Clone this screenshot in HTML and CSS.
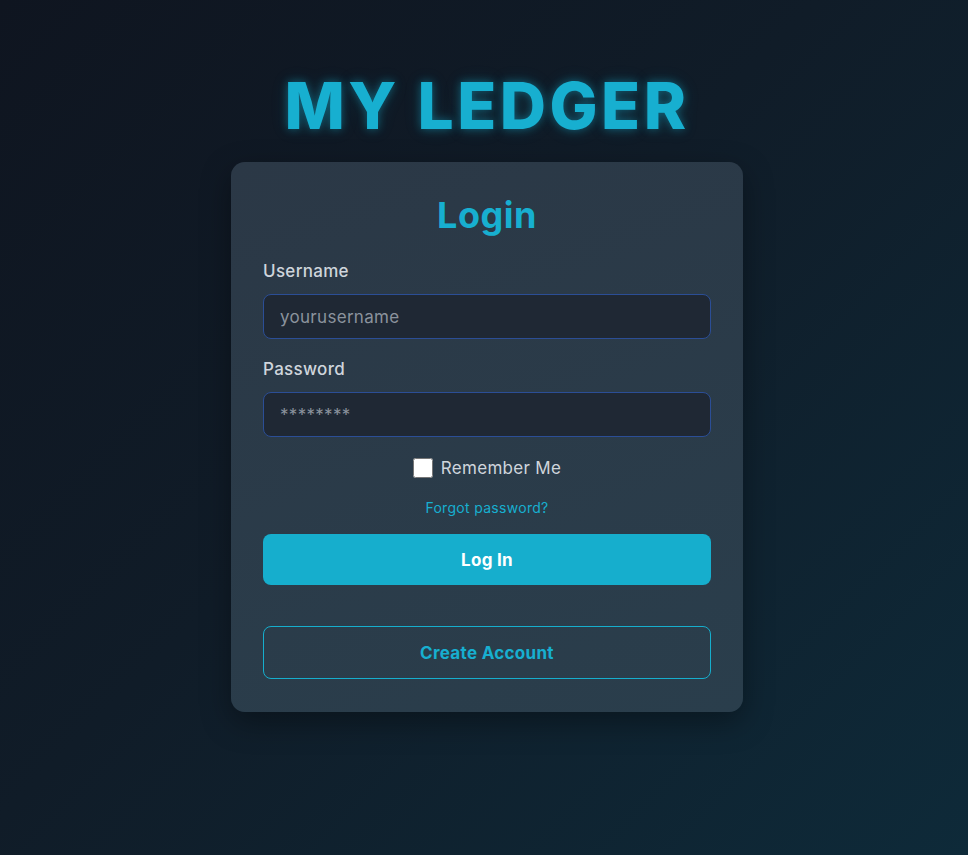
FILE: index.html
```html
<!DOCTYPE html>
<html lang="en">
<head>
<meta charset="utf-8">
<title>My Ledger - Login</title>
<link rel="stylesheet" href="styles.css">
</head>
<body>
<main class="page">
  <h1 class="brand">MY LEDGER</h1>
  <form class="card">
    <h2 class="card-title">Login</h2>
    <label class="field-label" for="username">Username</label>
    <input class="field-input" id="username" type="text" placeholder="yourusername">
    <label class="field-label field-label--spaced" for="password">Password</label>
    <input class="field-input" id="password" type="password" placeholder="********">
    <div class="remember">
      <input class="remember-box" id="remember" type="checkbox">
      <label class="remember-label" for="remember">Remember Me</label>
    </div>
    <a class="forgot" href="#">Forgot password?</a>
    <button class="btn btn-primary" type="button">Log In</button>
    <button class="btn btn-outline" type="button">Create Account</button>
  </form>
</main>
</body>
</html>
```
FILE: styles.css
```css
* { box-sizing: border-box; }
html, body { margin: 0; padding: 0; }
body {
  min-height: 100vh;
  background: linear-gradient(135deg, #0f1520 0%, #101c28 45%, #0e2a39 100%);
  font-family: "Inter", "Noto Sans", sans-serif;
  color: #cfd5dc;
  letter-spacing: 0.3px;
}
.page {
  display: flex;
  flex-direction: column;
  align-items: center;
  padding-top: 67px;
  padding-left: 6px;
  min-height: 855px;
}
.brand {
  margin: 0 0 18px;
  font-family: "Inter", sans-serif;
  font-weight: 800;
  font-size: 64px;
  line-height: 77px;
  letter-spacing: 3.5px;
  color: #17afd0;
  text-shadow: 0 0 8px rgba(23, 175, 208, 0.45), 0 0 18px rgba(23, 175, 208, 0.15);
}
.card {
  width: 512px;
  padding: 32px 32px 33px;
  border-radius: 14px;
  background: linear-gradient(160deg, #2b3846 0%, #2a3e4c 100%);
  box-shadow: 0 10px 30px rgba(0, 0, 0, 0.35);
  display: flex;
  flex-direction: column;
}
.card-title {
  margin: 0 0 22px;
  text-align: center;
  font-size: 36px;
  line-height: 43px;
  font-weight: 700;
  letter-spacing: 0.5px;
  color: #17afd0;
}
.field-label {
  display: block;
  font-size: 17px;
  line-height: 24px;
  font-weight: 500;
  color: #cfd5dc;
  margin-bottom: 11px;
}
.field-label--spaced { margin-top: 18px; }
.field-input {
  width: 100%;
  height: 45px;
  padding: 0 16px;
  border: 1px solid #2b4e96;
  border-radius: 8px;
  background: #1f2834;
  color: #e5e7eb;
  font-family: inherit;
  font-size: 17px;
  letter-spacing: 0.3px;
  outline: none;
}
.field-input::placeholder { color: #8b939d; }
.remember {
  display: flex;
  align-items: center;
  justify-content: center;
  gap: 8px;
  margin-top: 19px;
  height: 24px;
}
.remember-box {
  width: 20px;
  height: 20px;
  margin: 0;
}
.remember-label {
  font-size: 17px;
  line-height: 24px;
  color: #cfd5dc;
}
.forgot {
  align-self: center;
  margin-top: 18px;
  font-size: 14px;
  line-height: 20px;
  color: #17afd0;
  text-decoration: none;
}
.btn {
  width: 100%;
  border-radius: 8px;
  font-family: inherit;
  font-size: 17px;
  font-weight: 700;
  letter-spacing: 0.3px;
  cursor: pointer;
}
.btn-primary {
  margin-top: 16px;
  height: 51px;
  border: none;
  background: #16aecd;
  color: #ffffff;
}
.btn-outline {
  margin-top: 41px;
  height: 53px;
  border: 1px solid #16aecd;
  background: transparent;
  color: #17afd0;
}
```
